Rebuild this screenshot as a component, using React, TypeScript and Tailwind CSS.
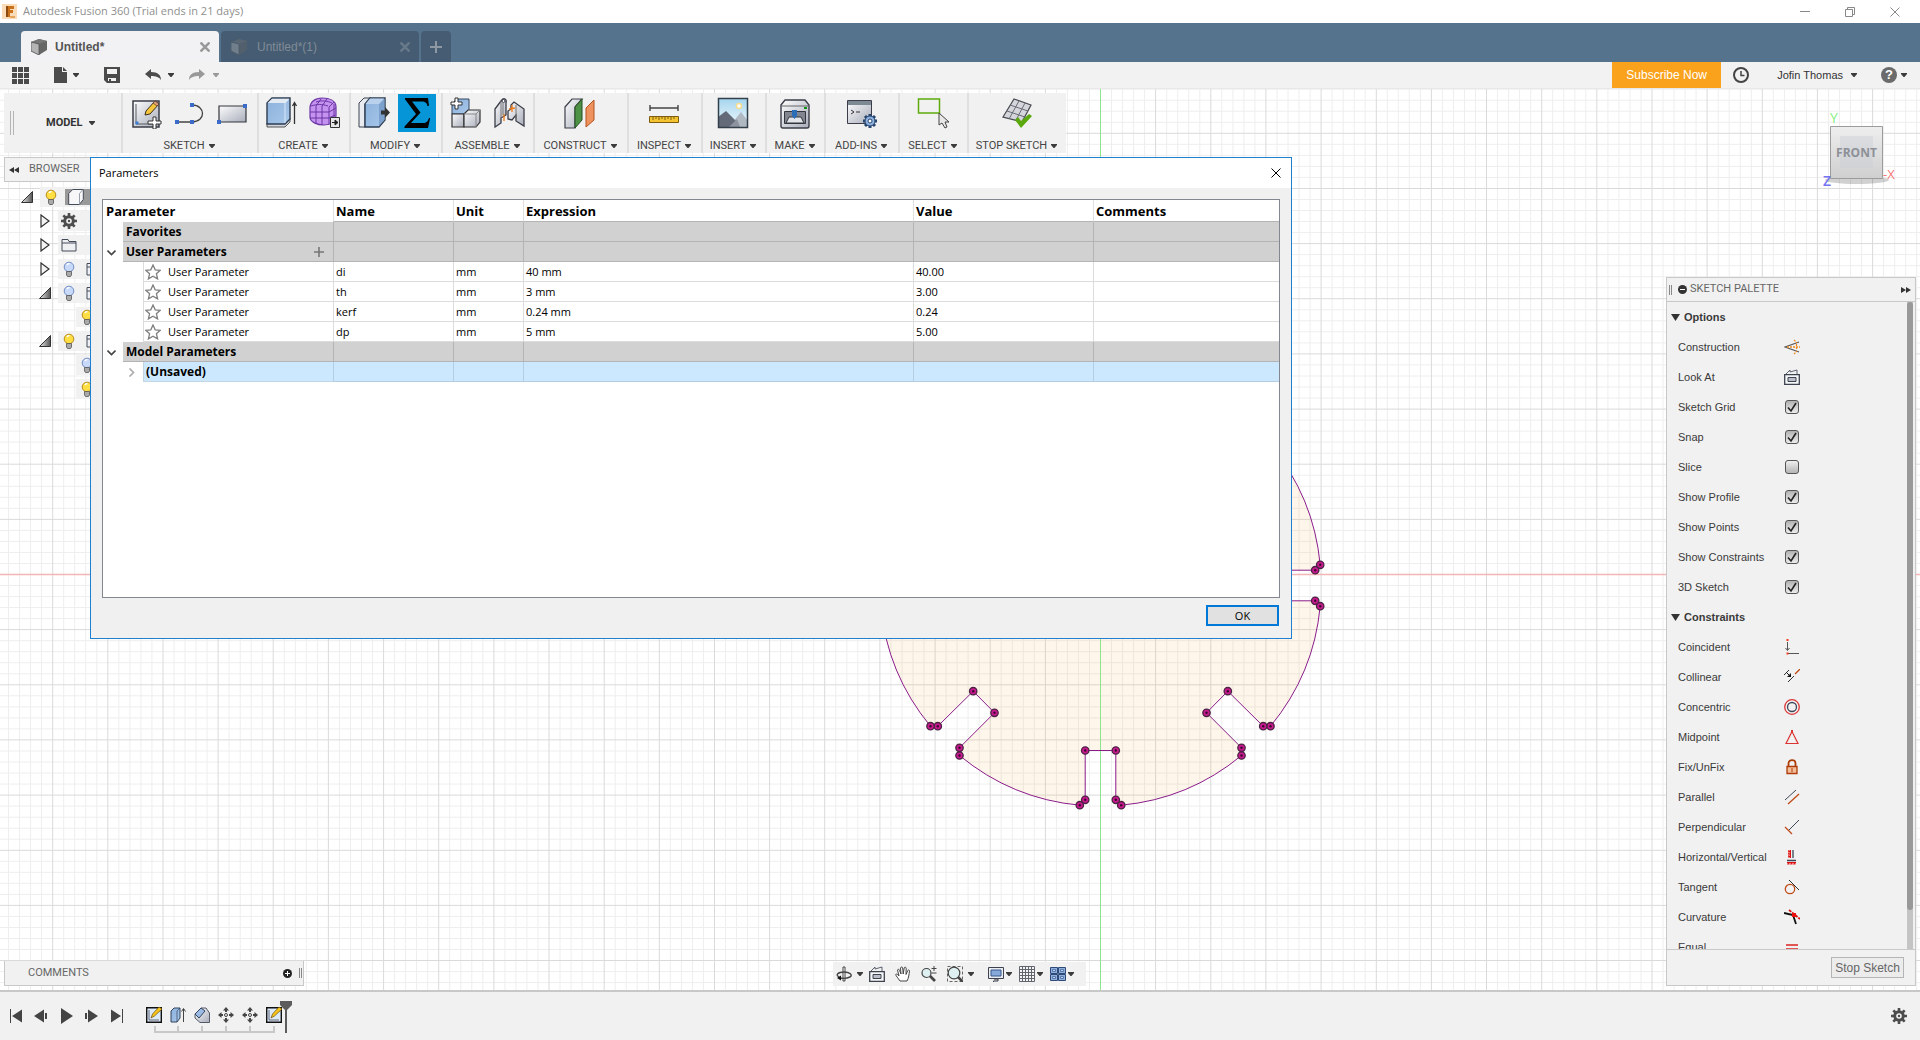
import { Fragment, useState, type ReactNode } from "react";

const R = 220.7;
const GRID = 11.03;

const Caret = ({ className = "text-[#3c3c3c]" }: { className?: string }) => (
  <svg viewBox="0 0 6 4" className={`w-1.5 h-1 shrink-0 ${className}`} fill="currentColor">
    <path d="M0 0h6v1L3.5 4h-1L0 1z" />
  </svg>
);

const Svg = ({ size = 32, children }: { size?: 16 | 32; children: ReactNode }) => (
  <svg viewBox={`0 0 ${size} ${size}`} className={size === 32 ? "size-8 shrink-0" : "size-4 shrink-0"} fill="none">
    {children}
  </svg>
);

/* shared gradients for the ribbon icons */
const Defs = () => (
  <svg className="absolute size-0">
    <defs>
      <linearGradient id="grey" x1="0" y1="0" x2="1" y2="1">
        <stop offset="0" stopColor="#fdfdfe" />
        <stop offset="1" stopColor="#a9adba" />
      </linearGradient>
      <linearGradient id="blue" x1="0" y1="0" x2="1" y2="1">
        <stop offset="0" stopColor="#8ab0dc" />
        <stop offset="1" stopColor="#a9c8ea" />
      </linearGradient>
      <linearGradient id="sky" x1="0" y1="0" x2="0" y2="1">
        <stop offset="0" stopColor="#a5d5ee" />
        <stop offset="1" stopColor="#f2fafd" />
      </linearGradient>
      <linearGradient id="cube" x1="0" y1="0" x2="0" y2="1">
        <stop offset="0" stopColor="#eeeeee" />
        <stop offset="1" stopColor="#cfcfcf" />
      </linearGradient>
      <linearGradient id="arrow" x1="0" y1="0" x2="1" y2="0">
        <stop offset="0" stopColor="#eee" />
        <stop offset="1" stopColor="#555" />
      </linearGradient>
    </defs>
  </svg>
);

const SketchIcon = () => (
  <Svg>
    <path d="M3 4h26v26H3z" fill="url(#grey)" stroke="#3b3e48" strokeWidth="1.5" />
    <path d="M6 7v20h20" stroke="#55585f" />
    <path d="M5.500 24.500h3v3h-3z" fill="#3a80d8" />
    <path d="M15 18l1-4L25 4l4 3-9 10z" fill="#f5c63c" stroke="#3b2e1a" />
    <path d="M23 6l4 3 2-2-4-3z" fill="#dca07c" stroke="#5a3a2a" strokeWidth=".7" />
    <path d="M23 20h3v4h5v3h-5v5h-3v-5h-5v-3h5z" fill="#fff" stroke="#333" />
  </Svg>
);
const LineIcon = () => (
  <Svg>
    <path d="M4 25h15M19 8c14 0 14 17 0 17" stroke="#444" strokeWidth="1.300" />
    <path d="M2 23h4v4H2zM17 23h4v4h-4zM17 6h4v4h-4z" fill="#3b6cc9" />
  </Svg>
);
const RectIcon = () => (
  <Svg>
    <path d="M3 9h27v16H3z" fill="url(#grey)" stroke="#33363d" strokeWidth="1.200" />
    <path d="M1 23h4v4H1zM27 7h4v4h-4z" fill="#3b6cc9" />
  </Svg>
);
const ExtrudeIcon = () => (
  <Svg>
    <path d="M1 26v4h18l5-5v-4z" fill="#d2d5dd" stroke="#555" />
    <path d="M1 6l5-5h18v21l-5 5H1z" fill="url(#blue)" stroke="#2d3c50" strokeWidth="1.400" />
    <path d="M1.700 6L6 1.700h17L19 6z" fill="#e4eaf2" />
    <path d="M19 6v20M19 6l4-4" stroke="#d9e8f8" />
    <path d="M28.500 27V6M26.500 9l2-3.500 2 3.500" stroke="#333" strokeWidth="1.300" />
  </Svg>
);
const FormIcon = () => (
  <Svg>
    <path d="M1 11c0-6 5-10 12-10 8 0 14 3 14 9v8c0 7-5 10-12 10S1 25 1 20z" fill="#c493f0" stroke="#6b35a5" strokeWidth="1.200" />
    <path d="M2 9c6-2 11-2 17 0M7 5c6-2 12-1 16 1M1 15h19l7-4M1 21h19l6-3M7 27V9l5-7M13 28V9l5-7M20 27V10l5-5M25 23V7" stroke="#6b35a5" />
    <path d="M21.500 20.500h9v10h-9z" fill="#e8e8e8" stroke="#333" />
    <path d="M23 25.500h5M26 23l3 2.500-3 2.500z" fill="#222" stroke="#222" />
  </Svg>
);
const PressPullIcon = () => (
  <Svg>
    <path d="M1 6l5-5h7L7 7v23H1z" fill="#e9ebf0" stroke="#3a4250" />
    <path d="M7 7l5-6h15v22l-6 7H7z" fill="url(#blue)" stroke="#2d3c50" strokeWidth="1.400" />
    <path d="M21 29V7l5.500-5.500V23z" fill="#7ba1cc" />
    <path d="M7.500 7H21l5-5.500H12z" fill="#b9d1ec" />
    <path d="M23 13.500h4V10l5 5.500-5 5.500v-3.500h-4z" fill="#333" />
  </Svg>
);
const SigmaIcon = () => (
  <span className="block size-8 shrink-0 bg-[#0696d7] ring-3 ring-[#0696d7]">
    <Svg>
      <path d="M4 1h23l1 8h-1.500c-.5-3-2-4.500-6-4.500H11l8.500 11L10 26h12c3.500 0 5-2 6-5h1.200L27 31H3.500v-1.500L15 17 4 2.300z" fill="#000" />
    </Svg>
  </span>
);
const ComponentIcon = () => (
  <Svg>
    <path d="M2 9l4-7h13v15H2z" fill="url(#blue)" stroke="#34465e" />
    <path d="M2 17h12v13H2z" fill="url(#grey)" stroke="#333" strokeWidth="1.200" />
    <path d="M14 17l4-4h12v12l-4 5H14z" fill="url(#grey)" stroke="#333" strokeWidth="1.200" />
    <path d="M14 17h12v13M26 17l4-4" stroke="#888" />
    <path d="M5 1h3v4h4v3H8v4H5V8H1V5h4z" fill="#fff" stroke="#333" />
  </Svg>
);
const JointIcon = () => (
  <Svg>
    <path d="M2 12l6-8c3-4 6-2 5 2v12l-5 3v5l-6 4z" fill="url(#grey)" stroke="#3b3e48" strokeWidth="1.300" />
    <path d="M8 4v17M10 6v12" stroke="#777" />
    <circle cx="10.500" cy="4" r="1.500" fill="#fff" stroke="#3b3e48" />
    <path d="M15 14l3-2V8l3-3 10 7v17l-8-5v-6l-4 5-4-1z" fill="url(#grey)" stroke="#3b3e48" strokeWidth="1.300" />
    <path d="M23 8v16" stroke="#777" />
    <path d="M19 8v7M16 12l6-1M11 17v7" stroke="#f07c1a" strokeWidth="1.300" />
  </Svg>
);
const PlaneIcon = () => (
  <Svg>
    <path d="M1 10l7-8h10l-7 8v21H1z" fill="url(#grey)" stroke="#3b3e48" strokeWidth="1.200" />
    <path d="M11 10l7-8v21l-7 8z" fill="#4c9145" stroke="#274f24" />
    <path d="M22 11l8-8v20l-8 7z" fill="#ee9260" stroke="#b5521c" />
  </Svg>
);
const MeasureIcon = () => (
  <Svg>
    <path d="M2 8v6M30 8v6M2 11h28" stroke="#444" strokeWidth="1.400" />
    <path d="M1.500 19.500h29v6h-29z" fill="#f3c331" stroke="#7d5c10" />
    <path d="M5 20v3M8 20v2M11 20v3M14 20v2M17 20v3M20 20v2M23 20v3M26 20v2" stroke="#7d5c10" />
  </Svg>
);
const ImageIcon = () => (
  <Svg>
    <path d="M1.500 1.500h29v29h-29z" fill="url(#sky)" />
    <path d="M15 26l9-11 7 9v6H15z" fill="#b0b8c2" />
    <path d="M1 20l8-6 12 12 1 4H1z" fill="#646a78" />
    <path d="M12 30l8-8 3 8z" fill="#8d939f" />
    <circle cx="22" cy="9" r="2.500" fill="#fff" stroke="#f5dd92" strokeWidth="1.500" />
    <path d="M1.500 1.500h29v29h-29z" stroke="#33404c" strokeWidth="1.500" />
  </Svg>
);
const PrintIcon = () => (
  <Svg>
    <path d="M2 8l4-5h20l4 5v21c0 1-1 2-2 2H4c-1 0-2-1-2-2z" fill="url(#grey)" stroke="#3b3e48" strokeWidth="1.400" />
    <path d="M2 9h28" stroke="#666" />
    <path d="M5.500 14.500h21v12h-21z" fill="#80858f" stroke="#33363d" />
    <path d="M7 26l3-6h12l3 6z" fill="#e2e4e9" stroke="#33363d" />
    <path d="M13 13h5v6l-2.500 3L13 19z" fill="#2c6db8" />
    <path d="M25 10h3v2h-3z" fill="#139313" />
  </Svg>
);
const AddinsIcon = () => (
  <Svg>
    <path d="M2.500 3.500h24v23h-24z" fill="url(#grey)" stroke="#3b3e48" />
    <path d="M3 4h23v4H3z" fill="#7d8a93" />
    <path d="M6 13l3 2-3 2M11 15h4" stroke="#333" />
    <path d="M18 24h14M25 17v14M20 19l10 10M30 19L20 29" stroke="#26456f" strokeWidth="3" />
    <circle cx="25" cy="24" r="5" fill="#8fb1e0" stroke="#26456f" />
    <circle cx="25" cy="24" r="2" fill="#fff" stroke="#26456f" />
  </Svg>
);
const SelectIcon = () => (
  <Svg>
    <path d="M1.500 2h21v14h-21z" stroke="#5fab0d" strokeWidth="1.500" />
    <path d="M22 16v12l3-2 3 5 2-1-2-5h4z" fill="#e8e8e8" stroke="#444" />
  </Svg>
);
const StopSketchIcon = () => (
  <Svg>
    <path d="M13 2l17 6-9 17L2 20z" fill="#d4d6dc" stroke="#44474e" strokeWidth="1.200" />
    <path d="M18 4L8 22M24 6l-9 17M9 8l18 6M6 14l18 6" stroke="#6a6d75" />
    <path d="M14 23l3-3 3 4 8-7 3 2-11 12z" fill="#5aa80b" />
  </Svg>
);

const ribbon: { label: string; width: string; icons: (() => ReactNode)[] }[] = [
  { label: "SKETCH", width: "w-[136px]", icons: [SketchIcon, LineIcon, RectIcon] },
  { label: "CREATE", width: "w-[92px]", icons: [ExtrudeIcon, FormIcon] },
  { label: "MODIFY", width: "w-[92px]", icons: [PressPullIcon, SigmaIcon] },
  { label: "ASSEMBLE", width: "w-[92px]", icons: [ComponentIcon, JointIcon] },
  { label: "CONSTRUCT", width: "w-[94px]", icons: [PlaneIcon] },
  { label: "INSPECT", width: "w-[74px]", icons: [MeasureIcon] },
  { label: "INSERT", width: "w-16", icons: [ImageIcon] },
  { label: "MAKE", width: "w-[59px]", icons: [PrintIcon] },
  { label: "ADD-INS", width: "w-[74px]", icons: [AddinsIcon] },
  { label: "SELECT", width: "w-[69px]", icons: [SelectIcon] },
  { label: "STOP SKETCH", width: "w-[99px]", icons: [StopSketchIcon] },
];

const Ribbon = () => (
  <div className="absolute left-1 top-1 flex h-[60px] bg-[#f1f1f1] font-['Roboto',sans-serif] text-[11px] text-[#444]">
    <div className="flex w-[117px] items-center">
      <span className="ml-1.5 h-6 w-1 border-x border-[#b5b5b5]" />
      <button className="ml-8 flex items-center gap-1.5 font-bold text-[#333]">
        MODEL <Caret />
      </button>
    </div>
    {ribbon.map(({ label, width, icons }) => (
      <div key={label} className={`flex flex-col items-center border-l-2 border-[#dfdfdf] pr-0.5 pt-1 ${width}`}>
        <div className="flex gap-[11px]">
          {icons.map((Icon, i) => (
            <button key={i} aria-label={label} className="block">
              <Icon />
            </button>
          ))}
        </div>
        <button className="mt-2.5 flex items-center gap-1 whitespace-nowrap leading-[14px]">
          {label} <Caret />
        </button>
      </div>
    ))}
  </div>
);

const DocCube = ({ dim }: { dim?: boolean }) => (
  <svg viewBox="0 0 16 16" className={`size-4 ${dim ? "opacity-40" : ""}`}>
    <path d="M0 3l8-3 8 2v9l-8 5-8-4z" fill="#666" />
    <path d="M0 3l8 2v11l-8-4z" fill="#b4b4b4" />
    <path d="M1 3l7 2 8-3-8-2z" fill="#777" />
    <path d="M0 3l8 2v11l-8-4z" fill="none" stroke="#555" strokeWidth=".8" />
  </svg>
);

const Cross = ({ className, weight = 1 }: { className: string; weight?: number }) => (
  <svg viewBox="0 0 10 10" className={className} fill="none" stroke="currentColor" strokeWidth={weight}>
    <path d="M.500.500l9 9M9.500.500l-9 9" />
  </svg>
);

const Header = () => (
  <header className="shrink-0">
    <div className="flex h-[23px] items-center bg-white pl-0.5 font-['Open_Sans',sans-serif] text-[11px] text-[#8f8f8f]">
      <svg viewBox="0 0 15 15" className="mr-1 size-[15px]">
        <path d="M0 0h15v15H0z" fill="#fbdcb8" />
        <path d="M4 2h8v3H8v1h3v3H8v4H4z" fill="#c9711b" />
        <path d="M4 2h2v11H4z" fill="#8b4a12" />
        <path d="M8 12h5v2H8z" fill="#e8a45a" />
      </svg>
      <span className="ml-0.5">Autodesk Fusion 360 (Trial ends in 21 days)</span>
      <div className="ml-auto mr-5 flex items-center gap-[35px]">
        <button aria-label="Minimize" className="h-px w-2.5 bg-[#888]" />
        <button aria-label="Restore">
          <svg viewBox="0 0 10 10" className="size-2.5" fill="none" stroke="#888">
            <path d="M.500 2.500h7v7h-7zM2.500 2V.500h7v7H8" />
          </svg>
        </button>
        <button aria-label="Close window"><Cross className="size-2.5 text-[#888]" /></button>
      </div>
    </div>
    <nav className="flex h-[39px] items-end gap-0.5 bg-[#56738d] pl-[21px] text-[12px]">
      <div className="flex h-[31px] w-[198px] items-center rounded-t bg-[#f2f2f5] pl-2.5 pr-[9px] text-[#555]">
        <DocCube />
        <a href="#untitled" className="ml-2 font-bold">Untitled*</a>
        <button aria-label="Close tab" className="ml-auto"><Cross weight={2.5} className="size-2.5 text-[#999]" /></button>
      </div>
      <div className="flex h-[31px] w-[198px] items-center rounded-t bg-[#455c72] pl-2.5 pr-[9px] text-[#808b96]">
        <DocCube dim />
        <a href="#untitled-1" className="ml-2.5">Untitled*(1)</a>
        <button aria-label="Close tab" className="ml-auto"><Cross weight={2.5} className="size-2.5 text-[#687989]" /></button>
      </div>
      <button aria-label="New tab" className="flex h-[31px] w-[30px] items-center justify-center rounded-t bg-[#455c72]">
        <svg viewBox="0 0 12 12" className="size-3"><path d="M5 0h2v5h5v2H7v5H5V7H0V5h5z" fill="#8d98a3" /></svg>
      </button>
    </nav>
    <div className="flex h-[27px] items-center border-b border-[#e8e8e8] bg-[#f2f2f2] pl-3 text-[11px] text-[#333]">
      <button aria-label="Data panel">
        <svg viewBox="0 0 17 17" className="size-[17px]" fill="#4b4b4b">
          <path d="M0 0h5v5H0zM6 0h5v5H6zM12 0h5v5h-5zM0 6h5v5H0zM6 6h5v5H6zM12 6h5v5h-5zM0 12h5v5H0zM6 12h5v5H6zM12 12h5v5h-5z" />
        </svg>
      </button>
      <button aria-label="File" className="ml-[25px] flex items-center gap-1.5">
        <svg viewBox="0 0 13 16" className="h-4 w-[13px]" fill="#4b4b4b"><path d="M0 0h8v5h5v11H0zM9 0l4 4H9z" /></svg>
        <Caret />
      </button>
      <button aria-label="Save" className="ml-[25px]">
        <svg viewBox="0 0 16 16" className="size-4" fill="#4b4b4b" fillRule="evenodd"><path d="M0 0h16v16H3l-3-3zM3 2v5h10V2zM4 11v3h8v-3zM5 12h2v2H5z" /></svg>
      </button>
      <button aria-label="Undo" className="ml-[25px] flex items-center gap-[7px]">
        <svg viewBox="0 0 16 12" className="h-3 w-4" fill="#4b4b4b"><path d="M0 5l6-5v3c7 0 10 3 10 8-2-3-5-4-10-4v3z" /></svg>
        <Caret />
      </button>
      <button aria-label="Redo" className="ml-[15px] flex items-center gap-2">
        <svg viewBox="0 0 16 12" className="h-3 w-4" fill="#999"><path d="M16 5l-6-5v3C3 3 0 6 0 11c2-3 5-4 10-4v3z" /></svg>
        <Caret className="text-[#999]" />
      </button>
      <button className="ml-auto h-[26px] w-[109px] bg-[#faa21b] text-[12px] text-white">Subscribe Now</button>
      <button aria-label="Job status" className="ml-3">
        <svg viewBox="0 0 16 16" className="size-4" fill="none" stroke="#444" strokeWidth="2"><circle cx="8" cy="8" r="7" /><path d="M8 4v4.500h3.500" strokeWidth="1.500" /></svg>
      </button>
      <button className="ml-7 flex items-center gap-2">Jofin Thomas <Caret /></button>
      <button aria-label="Help" className="ml-6 mr-[13px] flex items-center gap-1">
        <span className="flex size-4 items-center justify-center rounded-full bg-[#6b6b6b] text-[13px] font-bold text-white">?</span>
        <Caret />
      </button>
    </div>
  </header>
);

const arm: [number, number][] = [
  [219.7, 20.7], [214.7, 15.3], [165, 15.3], [165, -15.3], [214.7, -15.3], [219.7, -20.7],
];
const corner: [number, number][] = [
  [170, 140.7], [162.7, 140.7], [127.3, 105.7], [106, 127.3], [141, 162.3], [141, 170],
];
const foot: [number, number][] = [
  [20.7, 219.7], [15.3, 214.3], [15.3, 165], [-15.3, 165], [-15.3, 214.3], [-20.7, 219.7],
];
const flipX = (pts: [number, number][]) => pts.map(([x, y]): [number, number] => [-x, y]).reverse();
const flipY = (pts: [number, number][]) => pts.map(([x, y]): [number, number] => [x, -y]).reverse();
// notches, clockwise from the right-hand one
const notches = [
  [...arm].reverse(), corner, foot, flipX(corner), flipX([...arm].reverse()),
  flipX(flipY(corner)), flipY(foot), flipY(corner),
];
const profile =
  notches
    .map((pts, i) => `${i ? `A${R} ${R} 0 0 1 ` : "M"}${pts.map((p) => p.join(" ")).join("L")}`)
    .join("") + `A${R} ${R} 0 0 1 219.7 -20.7Z`;

const gridPath = (major: boolean) => {
  let d = "";
  for (let i = -100; i <= 100; i++) {
    if ((i % 5 === 0) !== major) continue;
    const p = (i * GRID).toFixed(1);
    d += `M${p} -1200V1200M-1200 ${p}H1200`;
  }
  return d;
};

const Drawing = () => (
  <svg className="absolute inset-0 size-full" fill="none">
    <g transform="translate(1100.5 485.5)">
      <path d={gridPath(false)} stroke="#eeeeee" />
      <path d={gridPath(true)} stroke="#dadada" />
      <path d="M-1200 0H1200" stroke="#f3b5b5" strokeWidth="1.500" />
    </g>
    <g transform="translate(1100.5 496.500)">
      <path d={profile} fill="#ff9a1f" fillOpacity=".09" />
      <path d="M0 -600V600" stroke="#8de68d" />
      <path d={profile} stroke="#8a1c8a" />
      {notches.flat().map(([x, y], i) => (
        <Fragment key={i}>
          <circle cx={x} cy={y} r="3.700" fill="#c8188f" stroke="#4c2443" strokeWidth="1.300" />
          <circle cx={x} cy={y} r="1.200" fill="#3a0a2c" />
        </Fragment>
      ))}
    </g>
  </svg>
);

const ViewCube = () => (
  <svg viewBox="0 0 90 90" className="absolute right-[15px] top-5 h-[90px] w-[90px]">
    <ellipse cx="42" cy="71" rx="32" ry="4" fill="#000" fillOpacity=".18" />
    <path d="M15.500 17.500h52v52h-52z" fill="url(#cube)" stroke="#9c9c9c" />
    <path d="M25 27h33v32H25z" fill="#c9cdd6" fillOpacity=".4" />
    <g className="font-['Open_Sans',sans-serif]">
      <text x="41.500" y="48" textAnchor="middle" className="text-[12px] font-bold" fill="#8d9096">FRONT</text>
      <text x="15" y="14" className="text-[14px]" fill="#86f086">Y</text>
      <text x="8" y="77" className="text-[14px] font-semibold" fill="#7474f2">Z</text>
      <text x="68" y="70" className="text-[13px]" fill="#f57878">-X</text>
    </g>
  </svg>
);

const Bulb = ({ on }: { on?: boolean }) => (
  <Svg size={16}>
    <circle cx="8" cy="6" r="4.800" fill={on ? "#ffdf43" : "#c8d9fa"} stroke={on ? "#b88a18" : "#6f8cc4"} />
    <path d="M6 4c.5-1 1.500-1.500 2.500-1.500" stroke="#fff" strokeWidth="1.500" />
    <path d="M5.500 10.500h5v3.500l-1 1.500h-3l-1-1.500z" fill="#aaa" stroke="#555" strokeWidth=".8" />
  </Svg>
);
const GearShape = () => (
  <Svg size={16}>
    <circle cx="8" cy="8" r="4.300" stroke="#4d4d4d" strokeWidth="3" />
    <path d="M8 0v3M8 13v3M0 8h3M13 8h3M2.300 2.300l2.200 2.200M11.500 11.500l2.200 2.200M13.700 2.300l-2.200 2.200M4.500 11.500l-2.200 2.200" stroke="#4d4d4d" strokeWidth="2.600" />
    <circle cx="8" cy="8" r="1.200" fill="#4d4d4d" />
  </Svg>
);
const Folder = () => (
  <Svg size={16}>
    <path d="M1 2.500h6l1 2h7v9.500H1zM1 6h14" fill="#eef0f4" stroke="#444b58" />
  </Svg>
);
const Body = () => (
  <Svg size={16}>
    <path d="M.700 4.500l4-4h10.600v10l-4 5H.700z" fill="#f7f7f9" stroke="#444b58" />
    <path d="M11.500 15V4.500l3.500-4" stroke="#9aa0ab" />
  </Svg>
);

type Node = { pad: string; open?: boolean; leaf?: boolean; icons: ReactNode[]; selected?: boolean };
const tree: Node[] = [
  { pad: "pl-[17px]", open: true, icons: [<Bulb on />, <Body />], selected: true },
  { pad: "pl-[35px]", icons: [<GearShape />] },
  { pad: "pl-[35px]", icons: [<Folder />] },
  { pad: "pl-[35px]", icons: [<Bulb />, <Folder />] },
  { pad: "pl-[35px]", open: true, icons: [<Bulb />, <Folder />] },
  { pad: "pl-[53px]", leaf: true, icons: [<Bulb on />] },
  { pad: "pl-[35px]", open: true, icons: [<Bulb on />, <Folder />] },
  { pad: "pl-[53px]", leaf: true, icons: [<Bulb />] },
  { pad: "pl-[53px]", leaf: true, icons: [<Bulb on />] },
];

const Browser = () => (
  <aside className="absolute left-1 top-[68px] w-[300px] font-['Roboto',sans-serif] text-[11px]">
    <div className="flex h-[25px] items-center gap-2.5 border border-[#c8c8c8] bg-[#f2f2f2] pl-1 text-[#666]">
      <svg viewBox="0 0 10 6" className="h-1.5 w-2.5" fill="#333"><path d="M5 0v6L0 3zM10 0v6L5 3z" /></svg>
      BROWSER
    </div>
    <div className="pt-[3px]">
      {tree.map((node, i) => (
        <div key={i} className={`flex h-6 items-center ${node.pad}`}>
          <span className="w-[19px] shrink-0">
            {!node.leaf && (
              <svg viewBox="0 0 12 14" className="h-3.5 w-3">
                {node.open
                  ? <path d="M11.500 1.500v11H.500z" fill="url(#arrow)" stroke="#333" />
                  : <path d="M2 1v12l8-6z" fill="#f4f4f4" stroke="#333" strokeWidth="1.200" />}
              </svg>
            )}
          </span>
          <div className="flex h-5 flex-1 items-center bg-[#f1f1f1]">
            {node.icons.map((icon, k) => (
              <span key={k} className={node.selected && k ? "flex h-4 flex-1 items-center bg-[#999] pl-[3px]" : "pl-[3px] pr-1.5"}>
                {icon}
              </span>
            ))}
          </div>
        </div>
      ))}
    </div>
  </aside>
);

const ConstructionIcon = () => (
  <Svg size={16}>
    <path d="M15 3L1 8l14 5" stroke="#555" strokeWidth="1.200" />
    <path d="M3 8h13M10 1l3 3M10 15l3-3M12.500 5v6" stroke="#f08a1c" strokeWidth="1.300" strokeDasharray="2 1" />
  </Svg>
);
const LookAtIcon = () => (
  <Svg size={16}>
    <path d="M.700 5.700h14.600v9.600H.700z" fill="#f6f7f9" stroke="#3d434e" strokeWidth="1.300" />
    <path d="M4 8.500h8v4H4z" fill="#b9bec8" stroke="#3d434e" />
    <path d="M2 5l4-4v2l7-2v4" stroke="#5c6370" />
  </Svg>
);

const options = ["Sketch Grid", "Snap", "Slice", "Show Profile", "Show Points", "Show Constraints", "3D Sketch"];

const constraints: [string, ReactNode][] = [
  ["Coincident", <><path d="M3.500 3v8M1.500 9l2 2.500 2-2.500M4 14.500h11" stroke="#555" /><path d="M2.500 0h2v2h-2zM2.500 13.500h2v2h-2z" fill="#f03a1e" /></>],
  ["Collinear", <><path d="M0 6l5-5M4 13l6-6" stroke="#333" /><path d="M11 5l5-5" stroke="#c04a16" strokeWidth="1.300" /><path d="M2.500 3.500l3 3" stroke="#111" /><path d="M7 4v4H3z" fill="#111" /></>],
  ["Concentric", <><circle cx="8" cy="8" r="7.300" stroke="#dc3535" strokeWidth="1.300" /><circle cx="8" cy="8" r="4.500" stroke="#3d4658" strokeWidth="1.300" /></>],
  ["Midpoint", <><path d="M8 2.500L2 14.500h12z" stroke="#d33" strokeWidth="1.200" /><path d="M7 1h2v2H7z" fill="#d33" /></>],
  ["Fix/UnFix", <><path d="M4.500 7V4.500c0-4.500 7-4.500 7 0V7" stroke="#ad3c08" strokeWidth="1.800" /><path d="M3 7.500h10v7H3z" fill="#f4bd9a" stroke="#ad3c08" strokeWidth="1.300" /><path d="M8 9v4" stroke="#ad3c08" /></>],
  ["Parallel", <><path d="M1 11L12 1" stroke="#3d4658" /><path d="M4 15L15 5" stroke="#c04a16" strokeWidth="1.300" /></>],
  ["Perpendicular", <><path d="M4 12L15 1" stroke="#3d4658" /><path d="M1 8l7 7" stroke="#c04a16" strokeWidth="1.300" /></>],
  ["Horizontal/Vertical", <><path d="M4 1h3v8H4zM3 13h9v2.500H3z" fill="#f08080" /><path d="M4 2l3 1M4 4.500l3 1M4 7l3 1M6.500 1v8M3 13.500h9M4 15.500l1-2M7 15.500l1-2M10 15.500l1-2" stroke="#dd1111" /><path d="M9 1v8M3 11.500h9" stroke="#3d4658" strokeWidth="1.300" /></>],
  ["Tangent", <><circle cx="6" cy="10" r="4.700" stroke="#c04a16" strokeWidth="1.300" /><path d="M5 1l10 10" stroke="#333" /></>],
  ["Curvature", <><path d="M0 4l9 2 3 9" stroke="#111" strokeWidth="1.800" /><path d="M5 1l11 9" stroke="#d11" strokeWidth="1.800" strokeDasharray="3 1" /><path d="M8 4h4v4H8z" fill="#e11" /></>],
  ["Equal", <path d="M2 6h12M2 10h12" stroke="#d22" strokeWidth="1.300" />],
];

const SectionTitle = ({ children }: { children: ReactNode }) => (
  <h3 className="flex h-[30px] items-center gap-1 pl-1 text-[11px] font-bold">
    <svg viewBox="0 0 9 7" className="h-[7px] w-[9px]" fill="#333"><path d="M0 0h9L4.500 7z" /></svg>
    {children}
  </h3>
);

const SketchPalette = () => {
  const [checked, setChecked] = useState<string[]>(options.filter((o) => o !== "Slice"));
  const toggle = (o: string) =>
    setChecked(checked.includes(o) ? checked.filter((c) => c !== o) : [...checked, o]);

  return (
    <aside className="absolute bottom-1 right-1 top-[188px] flex w-[250px] flex-col border border-[#c8c8c8] bg-[#f1f1f1] text-[11px] text-[#3a3a3a]">
      <div className="flex h-6 shrink-0 items-center border-b border-[#c8c8c8] pl-0.5 pr-1 font-['Roboto',sans-serif] text-[#666]">
        <span className="h-2.5 w-[3px] border-x border-[#888]" />
        <svg viewBox="0 0 9 9" className="ml-1.5 mr-[3px] size-[9px]"><circle cx="4.500" cy="4.500" r="4.500" fill="#333" /><path d="M2 4h5v1H2z" fill="#fff" /></svg>
        SKETCH PALETTE
        <svg viewBox="0 0 10 6" className="ml-auto h-1.5 w-2.5" fill="#333"><path d="M0 0v6l5-3zM5 0v6l5-3z" /></svg>
      </div>
      <div className="flex min-h-0 flex-1 overflow-hidden">
        <div className="flex-1">
          <SectionTitle>Options</SectionTitle>
          <button className="flex h-[30px] w-full items-center pl-[11px]">
            <span className="w-[106px] text-left">Construction</span><ConstructionIcon />
          </button>
          <button className="flex h-[30px] w-full items-center pl-[11px]">
            <span className="w-[106px] text-left">Look At</span><LookAtIcon />
          </button>
          {options.map((option) => (
            <label key={option} className="flex h-[30px] items-center pl-[11px]">
              <span className="w-[107px]">{option}</span>
              <span className="grid">
                <input
                  type="checkbox"
                  checked={checked.includes(option)}
                  onChange={() => toggle(option)}
                  className="peer col-start-1 row-start-1 size-3.5 appearance-none rounded-[3px] border border-[#555] bg-linear-to-b from-[#f0f0f0] to-[#b4b4b4] checked:from-[#b2b2b2] checked:to-[#ededed]"
                />
                <svg viewBox="0 0 14 14" className="pointer-events-none invisible col-start-1 row-start-1 size-3.5 peer-checked:visible" fill="none" stroke="#222" strokeWidth="1.600">
                  <path d="M3 7.500l3 3.500 5-8" />
                </svg>
              </span>
            </label>
          ))}
          <SectionTitle>Constraints</SectionTitle>
          {constraints.map(([name, icon]) => (
            <button key={name} className="flex h-[30px] w-full items-center pl-[11px]">
              <span className="w-[106px] text-left">{name}</span><Svg size={16}>{icon}</Svg>
            </button>
          ))}
        </div>
        <div className="mr-0.5 w-1.5 bg-[#c4c4c4]">
          <div className="h-[94%] rounded-full bg-[#999]" />
        </div>
      </div>
      <div className="flex h-9 shrink-0 items-center justify-end border-t border-[#c8c8c8] pr-[11px]">
        <button className="h-[21px] w-[73px] whitespace-nowrap border border-[#b5b5b5] bg-[#ececec] text-[12px] text-[#666]">Stop Sketch</button>
      </div>
    </aside>
  );
};

const Star = () => (
  <svg viewBox="0 0 16 16" className="mr-[7px] size-4 shrink-0" fill="none" stroke="#808080" strokeWidth="1.300">
    <path d="M8 1l2.200 4.800 5 .5-3.800 3.400 1.200 5.200L8 12.200 3.400 14.900l1.200-5.200L.800 6.300l5-.5z" />
  </svg>
);
const Chevron = ({ className }: { className: string }) => (
  <svg viewBox="0 0 9 9" className={`size-[9px] ${className}`} fill="none" stroke="currentColor" strokeWidth="1.600">
    <path d="M.500 2.500l4 4 4-4" />
  </svg>
);

const userParameters = [
  { name: "di", expression: "40 mm", value: "40.00" },
  { name: "th", expression: "3 mm", value: "3.00" },
  { name: "kerf", expression: "0.24 mm", value: "0.24" },
  { name: "dp", expression: "5 mm", value: "5.00" },
];

const GroupRow = ({ label, open, add }: { label: string; open?: boolean; add?: boolean }) => (
  <tr className="h-5 font-bold">
    <td className="p-0">
      <div className="flex h-5">
        <span className="flex w-5 shrink-0 items-center justify-center pr-1">{open && <Chevron className="text-[#444]" />}</span>
        <span className="flex flex-1 items-center border-b border-[#b4b4b4] bg-[#d1d1d1] pl-[3px] pr-[9px] text-[12px]">
          {label}
          {add && (
            <button aria-label="Add user parameter" className="ml-auto">
              <svg viewBox="0 0 10 10" className="size-2.5" stroke="#777" strokeWidth="1.600"><path d="M5 0v10M0 5h10" /></svg>
            </button>
          )}
        </span>
      </div>
    </td>
    {[0, 1, 2, 3, 4].map((i) => (
      <td key={i} className="border-b border-l border-[#b4b4b4] bg-[#d1d1d1]" />
    ))}
  </tr>
);

const ParametersDialog = () => (
  <section
    role="dialog"
    aria-label="Parameters"
    className="absolute left-[90px] top-[157px] w-[1202px] border border-[#1f7fd0] bg-[#f0f0f0] pb-3 font-['Open_Sans',sans-serif] text-[11px] text-black"
  >
    <div className="flex h-[30px] items-center justify-between bg-white pl-2 pr-2.5">
      Parameters
      <button aria-label="Close"><Cross className="size-2.5 text-black" /></button>
    </div>
    <div className="mx-[11px] mt-[11px] h-[399px] border border-[#828790] bg-white">
      <table className="w-full table-fixed border-separate border-spacing-0 text-left leading-4">
        <colgroup>
          <col className="w-[230px]" />
          <col className="w-[120px]" />
          <col className="w-[70px]" />
          <col className="w-[390px]" />
          <col className="w-[180px]" />
          <col />
        </colgroup>
        <thead>
          <tr className="h-[22px] text-[13px]">
            <th className="p-0 pl-[3px]">Parameter</th>
            {["Name", "Unit", "Expression", "Value", "Comments"].map((h) => (
              <th key={h} className="border-b border-l border-b-[#b4b4b4] border-l-[#e0e0e0] p-0 pl-0.5">{h}</th>
            ))}
          </tr>
        </thead>
        <tbody>
          <GroupRow label="Favorites" />
          <GroupRow label="User Parameters" open add />
          {userParameters.map((p) => (
            <tr key={p.name} className="h-5">
              <td className="p-0">
                <div className="ml-10 flex h-5 items-center border-b border-l border-[#dcdcdc] pl-px"><Star />User Parameter</div>
              </td>
              <td className="border-b border-l border-[#dcdcdc] p-0 pl-0.5">{p.name}</td>
              <td className="border-b border-l border-[#dcdcdc] p-0 pl-0.5">mm</td>
              <td className="border-b border-l border-[#dcdcdc] p-0 pl-0.5">{p.expression}</td>
              <td className="border-b border-l border-[#dcdcdc] p-0 pl-0.5">{p.value}</td>
              <td className="border-b border-l border-[#dcdcdc] p-0" />
            </tr>
          ))}
          <GroupRow label="Model Parameters" open />
          <tr className="h-5 font-bold">
            <td className="p-0">
              <div className="flex h-5 pl-5">
                <span className="flex w-5 shrink-0 items-center justify-center pr-1"><Chevron className="-rotate-90 text-[#aaa]" /></span>
                <span className="flex flex-1 items-center border-b border-l border-[#c4d6e5] bg-[#cce8ff] pl-0.5 text-[12px]">(Unsaved)</span>
              </div>
            </td>
            {[0, 1, 2, 3, 4].map((i) => (
              <td key={i} className="border-b border-l border-[#b4cde0] bg-[#cce8ff]" />
            ))}
          </tr>
        </tbody>
      </table>
    </div>
    <div className="mr-3 mt-[7px] flex justify-end">
      <button className="h-[21px] w-[73px] border-2 border-[#0078d7] bg-[#e1e1e1] leading-4">OK</button>
    </div>
  </section>
);

const OrbitIcon = () => (
  <Svg size={16}>
    <path d="M7 1h2v14H7z" fill="#fff" stroke="#444" />
    <path d="M3 11C-1 9 2 6 8 6s9 3 6 5c-2 1-7 1.500-10 1" stroke="#444" strokeWidth="1.400" />
    <path d="M5 9.500v5L1 12z" fill="#111" />
  </Svg>
);
const HandIcon = () => (
  <Svg size={16}>
    <path d="M5 15C3 12 1 10 .700 8.500 1.500 7.500 3 8.500 4 10L2.500 4c.5-1.200 1.700-.8 2 .3L6 8 5.500 2c.4-1.300 1.900-1.300 2.200 0L8.200 8l1-6c.4-1.200 1.800-1 2 .2L11 8.500l1.800-4c.7-1 2-.4 1.700.7C14 8 13.800 12 12 15z" fill="#fff" stroke="#444" />
  </Svg>
);
const ZoomIcon = () => (
  <Svg size={16}>
    <circle cx="5.500" cy="7" r="4.500" fill="#dff0f2" stroke="#444" strokeWidth="1.200" />
    <path d="M9 10l5 5" stroke="#444" strokeWidth="2.600" />
    <path d="M13 0v5M10.500 2.500h5M10.500 7h5" stroke="#444" />
  </Svg>
);
const FitIcon = () => (
  <Svg size={16}>
    <path d="M.500.500h15v15H.500z" stroke="#666" strokeDasharray="3 2" />
    <circle cx="7" cy="7" r="5.800" fill="#dff0f2" stroke="#444" strokeWidth="1.200" />
    <path d="M11 11l5 5" stroke="#444" strokeWidth="2.600" />
  </Svg>
);
const DisplayIcon = () => (
  <Svg size={16}>
    <path d="M.500 1.500h15v11H.500z" fill="#e9ebf0" stroke="#3d434e" />
    <path d="M3 4h10v6H3z" fill="#87a9da" stroke="#34598c" />
    <path d="M6 13h4v2H5.500v1" fill="#ccc" stroke="#3d434e" />
  </Svg>
);
const GridIcon = () => (
  <Svg size={16}>
    <path d="M.500.500h15v15H.500zM.500 3.500h15M.500 6.500h15M.500 9.500h15M.500 12.500h15M3.500.500v15M6.500.500v15M9.500.500v15M12.500.500v15" fill="#f5f5f5" stroke="#60656e" />
  </Svg>
);
const ViewportIcon = () => (
  <Svg size={16}>
    <path d="M.500 1.500h7v6h-7zM8.500 1.500h7v6h-7zM.500 8.500h7v6h-7zM8.500 8.500h7v6h-7z" fill="#8fb0de" stroke="#2f4a77" />
    <path d="M2.500 3.500h3v2h-3zM10.500 3.500h3v2h-3zM2.500 10.500h3v2h-3zM10.500 10.500h3v2h-3z" stroke="#5878aa" fill="#bcd2f0" />
  </Svg>
);

const NavBar = () => (
  <div className="absolute bottom-1 left-[833px] flex h-6 w-[253px] items-center bg-[#f1f1f1] pl-[3px]">
    <button aria-label="Orbit" className="mr-1.5 flex items-center gap-[5px]"><OrbitIcon /><Caret /></button>
    <button aria-label="Look At" className="mr-2.5"><LookAtIcon /></button>
    <button aria-label="Pan" className="mr-2.5"><HandIcon /></button>
    <button aria-label="Zoom" className="mr-2.5"><ZoomIcon /></button>
    <button aria-label="Fit" className="mr-3.5 flex items-center gap-[5px]"><FitIcon /><Caret /></button>
    <button aria-label="Display settings" className="mr-[7px] flex items-center gap-0.5"><DisplayIcon /><Caret /></button>
    <button aria-label="Grid and snaps" className="mr-[7px] flex items-center gap-0.5"><GridIcon /><Caret /></button>
    <button aria-label="Viewports" className="flex items-center gap-0.5"><ViewportIcon /><Caret /></button>
  </div>
);

const CommentsBar = () => (
  <div className="absolute bottom-1 left-1 flex h-[25px] w-[300px] items-center border border-t-0 border-[#c8c8c8] bg-[#f1f1f1] pl-[23px] pr-px font-['Roboto',sans-serif] text-[11px] text-[#666]">
    COMMENTS
    <button aria-label="Add comment" className="ml-auto">
      <svg viewBox="0 0 9 9" className="size-[9px]"><circle cx="4.500" cy="4.500" r="4.500" fill="#222" /><path d="M4 2h1v2h2v1H5v2H4V5H2V4h2z" fill="#fff" /></svg>
    </button>
    <span className="ml-[7px] h-2.5 w-[3px] border-x border-[#888]" />
  </div>
);

const playback: [string, string][] = [
  ["Go to start", "M1 1h1v14H1zM13 1.500v13L3 8z"],
  ["Step back", "M10 1.500v13L0 8zM11 5h2v6h-2z"],
  ["Play", "M2 0v16l12-8z"],
  ["Step forward", "M1 5h2v6H1zM4 1.500v13L14 8z"],
  ["Go to end", "M2 1.500v13L12 8zM13 1h1v14h-1z"],
];

const TimelineSketch = () => (
  <Svg size={16}>
    <path d="M.700.700h14.600v14.600H.700z" fill="#dcebfa" stroke="#111" strokeWidth="1.400" />
    <path d="M3 3v10h10" stroke="#667" />
    <path d="M5 11l1.500-4L13 0l3 2-7.500 7z" fill="#f8c51e" stroke="#6b4a0c" strokeWidth=".7" />
  </Svg>
);
const TimelineMove = () => (
  <Svg size={16}>
    <circle cx="8" cy="8" r="1.500" stroke="#444" />
    <path d="M8 0l3 3.500H9V5H7V3.500H5zM8 16l3-3.500H9V11H7v1.500H5zM0 8l3.500-3v2H5v2H3.500v2zM16 8l-3.500-3v2H11v2h1.500v2z" fill="#444" />
  </Svg>
);
const timeline: [string, ReactNode][] = [
  ["Sketch 1", <TimelineSketch />],
  ["Extrude", <Svg size={16}><path d="M1 4l3-3h6v10l-3 4H1z" fill="url(#blue)" stroke="#33445c" /><path d="M7 4v11M7 4l3-3" stroke="#33445c" strokeWidth=".7" /><path d="M13.500 15V2M11.500 4.500l2-3 2 3" stroke="#444" /></Svg>],
  ["Chamfer", <Svg size={16}><path d="M1 7l6-6h5l3.500 5v9.500H6L1 11z" fill="url(#grey)" stroke="#555b66" /><path d="M1 7l6-6 4 3-6 7z" fill="#9cbce6" stroke="#33445c" /></Svg>],
  ["Move 1", <TimelineMove />],
  ["Move 2", <TimelineMove />],
  ["Sketch 2", <TimelineSketch />],
];

const Footer = () => (
  <footer className="flex h-[50px] shrink-0 items-start border-t-2 border-[#c8c8c8] bg-[#f1f1f1] pl-[9px] pr-[13px]">
    <div className="mt-4 flex gap-[9px]">
      {playback.map(([name, d]) => (
        <button key={name} aria-label={name}>
          <svg viewBox="0 0 16 16" className="size-4" fill="#444"><path d={d} /></svg>
        </button>
      ))}
    </div>
    <div className="relative ml-[21px] mt-[15px]">
      <div className="flex gap-2">
        {timeline.map(([name, icon]) => (
          <button key={name} aria-label={name} className="block">{icon}</button>
        ))}
      </div>
      <svg viewBox="0 0 122 7" className="ml-2 mt-[3px] h-[7px] w-[122px]" fill="none" stroke="#c8c8c8" strokeWidth="2">
        <path d="M1 0v6h119V0M24 0v6M48 0v6M72 0v6M96 0v6" />
      </svg>
      <svg viewBox="0 0 12 32" className="absolute -right-2.5 -top-1.5 h-8 w-3" fill="#5c5c5c">
        <path d="M0 0h12v4L7 9v23H5V9L0 4z" />
      </svg>
    </div>
    <button aria-label="Timeline settings" className="ml-auto mt-4"><GearShape /></button>
  </footer>
);

const App = () => (
  <div className="relative flex h-screen flex-col overflow-hidden bg-white font-['Liberation_Sans',sans-serif]">
    <Defs />
    <Header />
    <main className="relative flex-1 overflow-hidden">
      <Drawing />
      <ViewCube />
      <Ribbon />
      <Browser />
      <SketchPalette />
      <CommentsBar />
      <NavBar />
    </main>
    <Footer />
    <ParametersDialog />
  </div>
);

export default App;
